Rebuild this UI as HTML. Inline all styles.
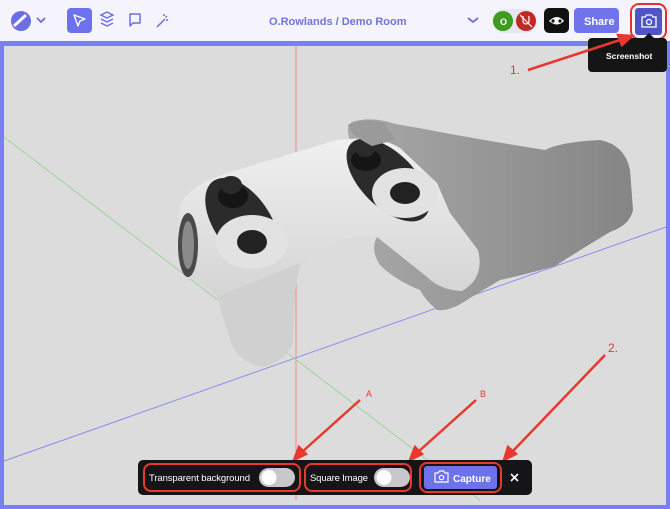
<!DOCTYPE html>
<html><head><meta charset="utf-8"><style>
*{margin:0;padding:0;box-sizing:border-box}
body{width:670px;height:509px;overflow:hidden;background:#dcdcdc;font-family:"Liberation Sans",sans-serif;position:relative}
.top{position:absolute;left:0;top:0;width:670px;height:41px;background:#f5f4fc}
.frame{position:absolute;left:0;top:41px;width:670px;height:468px;border:4px solid #7a7ff2;border-top-width:5px}
</style></head><body>
<div class="top"></div>
<div class="frame"></div>
<svg width="670" height="509" style="position:absolute;left:0;top:0">
<defs>
<linearGradient id="cg" x1="0" y1="0" x2="0" y2="1"><stop offset="0" stop-color="#f0f0f0"/><stop offset="1" stop-color="#c8c8c8"/></linearGradient>
<linearGradient id="hg" x1="0" y1="0" x2="1" y2="0"><stop offset="0" stop-color="#a8a8a8"/><stop offset="1" stop-color="#858585"/></linearGradient>
</defs>
<!-- top bar icons -->
<circle cx="21" cy="21" r="10" fill="#6a6ee0"/>
<path d="M14 26 L26 15" stroke="#f5f4fc" stroke-width="3"/>
<path d="M37 18 l4 4 l4 -4" stroke="#6a6ee0" stroke-width="1.8" fill="none"/>
<rect x="67" y="8" width="25" height="25" rx="4" fill="#6d72ec"/>
<path d="M74 15 l11 4 l-5 2 l-2 5 z" stroke="#fff" stroke-width="1.4" fill="none" stroke-linejoin="round"/>
<path d="M101 15 l6 -3 l6 3 l-6 3 z M101 19 l6 3 l6 -3 M101 23 l6 3 l6 -3" stroke="#6a6ee0" stroke-width="1.4" fill="none"/>
<path d="M130 14 h10 v9 h-7 l-3 3 z" stroke="#6a6ee0" stroke-width="1.5" fill="none" stroke-linejoin="round"/>
<path d="M157 27 l8 -8 M164 14 v2 M167 16 l-1.5 1.5 M168 20 h-2" stroke="#6a6ee0" stroke-width="1.5"/>
<text x="269" y="25" font-size="11" font-weight="bold" fill="#6f73e2">O.Rowlands  /  Demo Room</text>
<path d="M468 18 l5 4 l5 -4" stroke="#6a6ee0" stroke-width="1.8" fill="none"/>
<rect x="492" y="9" width="45" height="24" rx="12" fill="#e8e6f2"/>
<circle cx="503" cy="21" r="10" fill="#3f9b1e"/>
<text x="500" y="25" font-size="9" font-weight="bold" fill="#fff">O</text>
<circle cx="526" cy="21" r="10" fill="#c02a25"/>
<path d="M523 16 v5 a3 3 0 0 0 6 0 v-5 M520 15 l12 12" stroke="#fff" stroke-width="1.2" fill="none"/>
<rect x="544" y="8" width="25" height="25" rx="5" fill="#111"/>
<path d="M549 21 q8 -8 15 0 q-7 7 -15 0 z" fill="#fff"/><circle cx="553" cy="21" r="1.6" fill="#111"/><circle cx="560" cy="21" r="1.6" fill="#111"/>
<rect x="574" y="8" width="45" height="25" rx="4" fill="#7074ea"/>
<text x="584" y="25" font-size="11" font-weight="bold" fill="#fff">Share</text>
<rect x="635" y="8" width="27" height="27" rx="3" fill="#4f55c4"/>
<rect x="631" y="4" width="35" height="35" rx="8" fill="none" stroke="#e33030" stroke-width="2"/>
<path d="M642 17 h3 l1.5 -2 h5 l1.5 2 h3 v10 h-14 z" stroke="#fff" stroke-width="1.3" fill="none"/><circle cx="649" cy="22" r="2.5" stroke="#fff" stroke-width="1.3" fill="none"/>
<rect x="588" y="38" width="79" height="34" rx="4" fill="#151515"/>
<path d="M644 38 l5 -5 l5 5z" fill="#151515"/>
<text x="606" y="59" font-size="8.5" font-weight="bold" fill="#fff">Screenshot</text>
<!-- grid lines -->
<line x1="296" y1="46" x2="296" y2="500" stroke="#ef8a8a" stroke-width="1"/>
<line x1="4" y1="461" x2="666" y2="227" stroke="#8a8cf0" stroke-width="1"/>
<line x1="4" y1="137" x2="480" y2="500" stroke="#9fd49a" stroke-width="1"/>
<!-- hand -->
<path d="M352 122 Q372 116 395 124 Q420 128 445 133 Q500 143 545 150 Q560 142 600 140 Q625 145 630 170 L633 210 Q630 225 610 232 Q580 250 555 266 Q520 276 500 280 L470 298 Q450 312 437 310 Q425 300 420 290 Q395 280 380 265 Q370 250 377 237 L390 200 L350 140 Q345 128 352 122 Z" fill="url(#hg)"/>
<!-- controller -->
<path d="M180 205 Q190 185 227 173 L337 140 Q380 135 400 148 L437 183 L450 213 L478 250 Q485 278 462 291 Q440 290 427 277 L377 237 Q350 233 320 250 Q298 262 295 290 L293 343 Q285 362 262 367 Q240 362 232 345 L217 297 Q205 284 188 278 Q176 262 177 237 Z" fill="url(#cg)"/>
<path d="M300 263 Q294 285 293 343 Q285 362 262 367 Q240 362 232 345 L217 297 Z" fill="#d0d0d0"/>
<ellipse cx="188" cy="245" rx="10" ry="32" fill="#4a4a4a"/>
<ellipse cx="188" cy="245" rx="6" ry="24" fill="#8a8a8a"/>
<ellipse cx="242" cy="222" rx="28" ry="50" transform="rotate(-35 242 222)" fill="#2b2b2b"/>
<ellipse cx="388" cy="180" rx="27" ry="52" transform="rotate(-45 388 180)" fill="#2b2b2b"/>
<ellipse cx="252" cy="242" rx="36" ry="27" fill="#e2e2e2"/>
<ellipse cx="252" cy="242" rx="15" ry="12" fill="#222"/>
<ellipse cx="405" cy="193" rx="33" ry="25" fill="#e2e2e2"/>
<ellipse cx="405" cy="193" rx="15" ry="11" fill="#222"/>
<ellipse cx="233" cy="196" rx="15" ry="12" fill="#151515"/>
<ellipse cx="231" cy="185" rx="11" ry="9" fill="#2a2a2a"/>
<ellipse cx="366" cy="160" rx="15" ry="11" fill="#151515"/>
<ellipse cx="365" cy="149" rx="10" ry="8" fill="#2a2a2a"/>
<path d="M348 125 Q360 117 385 123 L395 140 L372 146 Q350 135 348 125 Z" fill="#9a9a9a"/>
<!-- annotations -->
<g stroke="#e8382f" stroke-width="2.5" fill="#e8382f">
<line x1="528" y1="70" x2="620" y2="40"/><path d="M632 36 l-14 -1 l4 10z"/>
<line x1="360" y1="400" x2="302" y2="452"/><path d="M294 460 l5 -13 l7 7z"/>
<line x1="476" y1="400" x2="418" y2="452"/><path d="M410 460 l5 -13 l7 7z"/>
<line x1="605" y1="355" x2="512" y2="452"/><path d="M504 460 l4 -13 l8 7z"/>
</g>
<text x="510" y="74" font-size="12" fill="#e8382f">1.</text>
<text x="608" y="352" font-size="12" fill="#e8382f">2.</text>
<text x="366" y="397" font-size="9" fill="#e8382f">A</text>
<text x="480" y="397" font-size="9" fill="#e8382f">B</text>
<!-- bottom bar -->
<rect x="138" y="460" width="394" height="35" rx="5" fill="#151518"/>
<rect x="144" y="464" width="156" height="27" rx="7" fill="none" stroke="#e8382f" stroke-width="2"/>
<text x="149" y="481" font-size="9.5" fill="#fff" textLength="101">Transparent background</text>
<rect x="259" y="468" width="36" height="19" rx="9.5" fill="#c8c8cc"/><circle cx="269" cy="477.5" r="7.5" fill="#fff"/>
<rect x="305" y="464" width="106" height="27" rx="7" fill="none" stroke="#e8382f" stroke-width="2"/>
<text x="310" y="481" font-size="9.5" fill="#fff" textLength="58">Square Image</text>
<rect x="374" y="468" width="36" height="19" rx="9.5" fill="#c8c8cc"/><circle cx="384" cy="477.5" r="7.5" fill="#fff"/>
<rect x="420" y="463" width="81" height="29" rx="7" fill="none" stroke="#e8382f" stroke-width="2"/>
<rect x="424" y="466" width="73" height="23" rx="3" fill="#6d71ea"/>
<path d="M435 473 h3 l1.5 -2 h4 l1.5 2 h3 v9 h-13 z" stroke="#fff" stroke-width="1.2" fill="none"/><circle cx="441.5" cy="477.5" r="2.2" stroke="#fff" stroke-width="1.2" fill="none"/>
<text x="453" y="482" font-size="10" font-weight="bold" fill="#fff">Capture</text>
<path d="M511 474 l7 7 M518 474 l-7 7" stroke="#fff" stroke-width="1.6"/>
</svg>
</body></html>
